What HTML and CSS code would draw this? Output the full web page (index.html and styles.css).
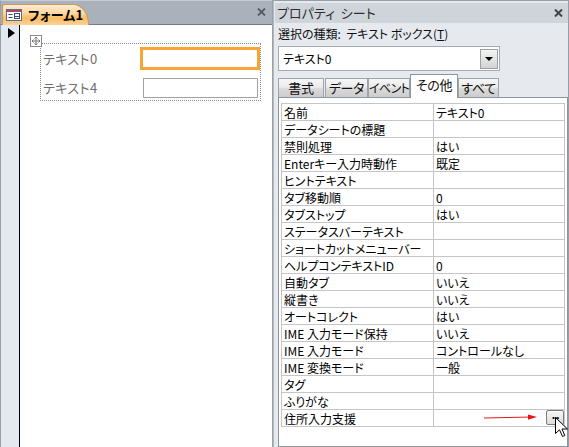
FILE: index.html
```
<!DOCTYPE html>
<html lang="ja">
<head>
<meta charset="utf-8">
<link rel="stylesheet" href="styles.css">
</head>
<body>
<div class="app">
  <div class="left">
    <div class="strip">
      <div class="doctab">
        <svg class="formicon" width="16" height="12" viewBox="0 0 16 12">
          <rect x="0.5" y="0.5" width="15" height="11" fill="#fff" stroke="#5d6f8e"/>
          <rect x="1" y="1" width="14" height="2" fill="#a8466c"/>
          <rect x="2.5" y="5" width="4" height="1" fill="#3b4b6b"/>
          <rect x="2.5" y="8" width="4" height="1" fill="#3b4b6b"/>
          <rect x="8.5" y="4.5" width="5" height="5" fill="none" stroke="#3b4b6b"/>
          <rect x="9" y="7" width="4" height="1" fill="#3b4b6b"/>
        </svg>
        <span class="doctitle">フォーム1</span>
      </div>
      <svg class="leftclose" width="9" height="8" viewBox="0 0 9 8">
        <path d="M1 0.5 L8 7.5 M8 0.5 L1 7.5" stroke="#555b63" stroke-width="1.8"/>
      </svg>
    </div>
    <div class="body">
      <div class="selector"><span class="tri"></span></div>
      <div class="canvas">
        <div class="group">
          <span class="handle">
            <svg width="12" height="12" viewBox="0 0 12 12">
              <rect x="0.5" y="0.5" width="11" height="11" fill="#fff" stroke="#8a8a8a"/>
              <path d="M6 2 V10 M2 6 H10 M6 2 L4.5 3.5 M6 2 L7.5 3.5 M6 10 L4.5 8.5 M6 10 L7.5 8.5 M2 6 L3.5 4.5 M2 6 L3.5 7.5 M10 6 L8.5 4.5 M10 6 L8.5 7.5" stroke="#777" stroke-width="1" fill="none"/>
            </svg>
          </span>
          <div class="frow r1">
            <span class="flabel">テキスト0</span>
            <span class="fbox selected"></span>
          </div>
          <div class="frow r2">
            <span class="flabel">テキスト4</span>
            <span class="fbox"></span>
          </div>
        </div>
      </div>
    </div>
  </div>
  <div class="right">
    <div class="titlebar">
      <span class="ptitle">プロパティ&nbsp;&nbsp;シート</span>
      <svg class="pclose" width="9" height="8" viewBox="0 0 9 8">
        <path d="M1 0.5 L8 7.5 M8 0.5 L1 7.5" stroke="#3e434a" stroke-width="2"/>
      </svg>
    </div>
    <div class="seltype">選択の種類:&nbsp; テキスト ボックス(<u>T</u>)</div>
    <div class="combo">
      <span class="ctext">テキスト0</span>
      <span class="cbtn"><span class="ctri"></span></span>
    </div>
    <div class="tabs">
      <span class="tab t1">書式</span>
      <span class="tab t2">データ</span>
      <span class="tab t3">イベント</span>
      <span class="tab active t4">その他</span>
      <span class="tab t5">すべて</span>
    </div>
    <div class="panel">
      <table class="props">
        <tr><td class="k">名前</td><td>テキスト0</td></tr>
        <tr><td class="k">データシートの標題</td><td></td></tr>
        <tr><td class="k">禁則処理</td><td>はい</td></tr>
        <tr><td class="k">Enterキー入力時動作</td><td>既定</td></tr>
        <tr><td class="k">ヒントテキスト</td><td></td></tr>
        <tr><td class="k">タブ移動順</td><td>0</td></tr>
        <tr><td class="k">タブストップ</td><td>はい</td></tr>
        <tr><td class="k">ステータスバーテキスト</td><td></td></tr>
        <tr><td class="k">ショートカットメニューバー</td><td></td></tr>
        <tr><td class="k">ヘルプコンテキストID</td><td>0</td></tr>
        <tr><td class="k">自動タブ</td><td>いいえ</td></tr>
        <tr><td class="k">縦書き</td><td>いいえ</td></tr>
        <tr><td class="k">オートコレクト</td><td>はい</td></tr>
        <tr><td class="k">IME 入力モード保持</td><td>いいえ</td></tr>
        <tr><td class="k">IME 入力モード</td><td>コントロールなし</td></tr>
        <tr><td class="k">IME 変換モード</td><td>一般</td></tr>
        <tr><td class="k">タグ</td><td></td></tr>
        <tr><td class="k">ふりがな</td><td></td></tr>
        <tr><td class="k">住所入力支援</td><td class="last"><span class="dots">...</span>
          <svg class="redarrow" width="54" height="7" viewBox="0 0 54 7">
            <path d="M0 4 L48 3" stroke="#e8161b" stroke-width="1"/>
            <path d="M44 0.5 L53 3 L44 5.8 Z" fill="#e8161b"/>
          </svg>
          <svg class="cursor" width="14" height="22" viewBox="0 0 14 22">
            <path d="M0.5 0.5 L0.5 16.5 L4.5 12.8 L7.5 19.5 L9.8 18.5 L7 12 L12.5 12 Z" fill="#fff" stroke="#000" stroke-width="1" stroke-linejoin="miter"/>
          </svg>
        </td></tr>
      </table>
    </div>
  </div>
</div>
</body>
</html>
```
FILE: styles.css
```
* { box-sizing: border-box; }
html, body { margin: 0; padding: 0; }
body {
  width: 569px;
  height: 447px;
  overflow: hidden;
  font-family: "Noto Sans CJK JP", "Noto Sans", sans-serif;
  font-feature-settings: "palt";
  color: #000;
  background: #fff;
}
.app { display: flex; width: 569px; height: 447px; }

/* left document pane */
.left {
  width: 273px;
  height: 447px;
  display: flex;
  flex-direction: column;
  border-right: 1px solid #9ba1a9;
}
.strip {
  height: 25px;
  background: #abb1ba;
  border-top: 1px solid #c9cdd3;
  border-left: 1px solid #9ba1a9;
  border-bottom: 1px solid #767c86;
  display: flex;
  align-items: flex-end;
  justify-content: space-between;
  padding-left: 1px;
  padding-right: 6px;
}
.doctab {
  height: 21px;
  width: 87px;
  margin-bottom: -1px;
  display: flex;
  align-items: center;
  gap: 6px;
  padding-left: 3px;
  border: 1px solid #c99a5f;
  border-bottom: none;
  border-radius: 3px 16px 0 0 / 3px 20px 0 0;
  background: linear-gradient(#fdebd2 0%, #fcd8a1 40%, #f9bd62 65%, #fbd298 100%);
}
.formicon { flex: none; }
.doctitle { font-size: 13px; font-weight: bold; line-height: 16px; letter-spacing: 0.3px; }
.leftclose { align-self: center; margin-top: -2px; }

.body { flex: 1; display: flex; }
.selector {
  width: 20px;
  background: #e4e9ef;
  border-left: 1px solid #9ba1a9;
  border-right: 1px solid #000;
  padding: 3px 0 0 7px;
}
.tri {
  display: block;
  width: 0; height: 0;
  border-left: 7px solid #000;
  border-top: 5px solid transparent;
  border-bottom: 5px solid transparent;
}
.canvas { flex: 1; background: #fff; padding: 18px 0 0 20px; }
.group {
  position: relative;
  width: 221px;
  height: 58px;
  border: 1px dotted #8a8a8a;
  padding: 3px 0 0 2px;
}
.handle { position: absolute; left: -11px; top: -9px; line-height: 0; }
.frow { display: flex; align-items: center; justify-content: space-between; }
.r1 { height: 23px; }
.r2 { height: 20px; margin-top: 8px; padding-right: 2px; }
.flabel { color: #6e6e6e; font-size: 13px; line-height: 16px; letter-spacing: 0.4px; }
.fbox {
  display: block;
  width: 115px;
  height: 20px;
  border: 1px solid #a3a3a3;
  background: #fff;
}
.fbox.selected { width: 120px; height: 23px; border: 3px solid #f7a534; }

/* right property sheet */
.right {
  width: 296px;
  height: 447px;
  background: #e6eaef;
  border-left: 1px solid #b3b8bf;
  border-right: 1px solid #979da6;
  border-top: 1px solid #979da6;
  padding: 2px 0 0 1px;
  display: flex;
  flex-direction: column;
}
.titlebar {
  height: 20px;
  background: #cfd4db;
  display: flex;
  align-items: center;
  justify-content: space-between;
  padding: 0 5px 0 2px;
}
.ptitle { font-size: 13px; line-height: 16px; color: #2d2d2d; }
.seltype { font-size: 12px; line-height: 16px; padding: 3px 0 0 3px; color: #111; }
.combo {
  margin: 4px 0 0 3px;
  width: 222px;
  height: 25px;
  background: #fff;
  border: 1px solid #a5abb2;
  display: flex;
  align-items: center;
  justify-content: space-between;
  padding: 0 1px 0 4px;
}
.ctext { font-size: 12px; line-height: 16px; }
.cbtn {
  width: 18px;
  height: 20px;
  border: 1px solid #9aa0a8;
  background: linear-gradient(#f3f3f3, #e4e4e4 50%, #d3d3d3);
  display: flex;
  align-items: center;
  justify-content: center;
}
.ctri {
  width: 0; height: 0;
  border-top: 4px solid #000;
  border-left: 4px solid transparent;
  border-right: 4px solid transparent;
}
.tabs {
  margin: 3px 0 0 3px;
  height: 23px;
  display: flex;
  align-items: flex-end;
  position: relative;
  z-index: 1;
}
.tab {
  height: 19px;
  border: 1px solid #9ea4ab;
  border-bottom: none;
  background: linear-gradient(#f7f7f7 0%, #ebebeb 45%, #d9d9d9 55%, #cdcdcd 100%);
  font-size: 13px;
  line-height: 18px;
  text-align: center;
  color: #111;
  white-space: nowrap;
  letter-spacing: -0.3px;
}
.t1 { width: 46px; margin-right: 1px; }
.t2 { width: 43px; }
.t3 { width: 42px; font-size: 12px; letter-spacing: -0.6px; }
.t4 { width: 48px; }
.t5 { width: 41px; }
.tab.active {
  height: 24px;
  margin-bottom: -1px;
  background: #fff;
  line-height: 20px;
  border-color: #8f959d;
}
.panel {
  flex: 1;
  margin-left: 3px;
  width: 290px;
  background: #fff;
  border: 1px solid #8f959d;
  padding: 5px 0 0 2px;
}
.props {
  border-collapse: collapse;
  width: 284px;
  table-layout: fixed;
}
.props td {
  border: 1px solid #c5c5c5;
  height: 17px;
  padding: 0 2px;
  font-size: 12px;
  line-height: 15px;
  white-space: nowrap;
  overflow: visible;
  vertical-align: middle;
}
.props td.k { width: 152px; }
.props td.last { position: relative; }
.dots {
  position: absolute;
  right: 0;
  top: 0;
  width: 18px;
  height: 15px;
  border: 1px solid #7d7d7d;
  border-radius: 2px;
  background: linear-gradient(#f6f6f6, #dcdcdc);
  font-size: 10px;
  line-height: 8px;
  font-weight: bold;
  text-align: center;
  letter-spacing: -1px;
  color: #000;
}
.redarrow { position: absolute; left: 50px; top: 4px; }
.cursor { position: absolute; left: 121px; top: 7px; z-index: 2; }
```
